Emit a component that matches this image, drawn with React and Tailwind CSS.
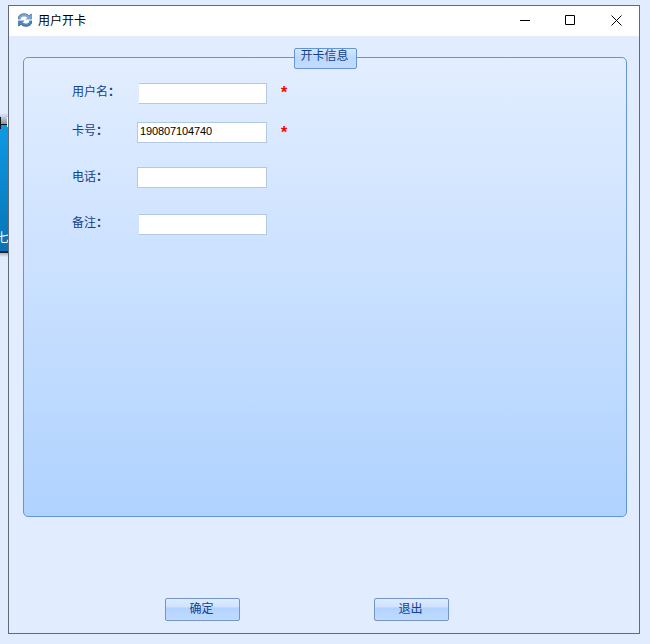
import { useState } from 'react'

const FIELDS = [
  { id: 'name', label: '用户名', row: 'h-[39px]', open: true, mark: 'mt-[2px]' },
  { id: 'card', label: '卡号', row: 'h-[45px]', mark: 'mt-[3px]' },
  { id: 'phone', label: '电话', row: 'h-[47px]', labelPad: 'pt-[2px]' },
  { id: 'remark', label: '备注', row: 'h-[21px]', open: true },
]

export default function App() {
  const [values, setValues] = useState({ name: '', card: '190807104740', phone: '', remark: '' })

  return (
    <div className="w-[650px] h-[644px] flex overflow-hidden bg-[#e1edff] font-['Liberation_Sans','Noto_Sans_CJK_SC',sans-serif] text-[12px] leading-[16px] text-[#15428b]">
      <BackgroundStrip />

      <div className="w-[632px] h-[629px] mt-[5px] flex flex-col border border-[#646a73] bg-[#e1edff]">
        <TitleBar />

        <div className="relative ml-[14px] mt-[21px] w-[604px] h-[460px] pt-[25px] rounded-[5px] border border-[#6496d7] bg-linear-to-b from-[#e3eeff] to-[#afd2ff]">
          <div className="absolute left-[270px] -top-[10px] w-[63px] h-[21px] pr-[2px] rounded-[2px] border border-[#6496d7] bg-linear-to-b from-[#d6e8ff] from-0% via-[#bcd8ff] via-45% to-[#c1dcff] text-center leading-[15px]">
            开卡信息
          </div>
          {FIELDS.map(f => (
            <Field
              key={f.id}
              field={f}
              value={values[f.id]}
              onChange={v => setValues({ ...values, [f.id]: v })}
            />
          ))}
        </div>

        <div className="mt-[81px] ml-[156px] flex gap-[134px]">
          <PushButton>确定</PushButton>
          <PushButton>退出</PushButton>
        </div>
      </div>
    </div>
  )
}

function TitleBar() {
  return (
    <header className="h-[30px] shrink-0 flex items-center bg-white text-black">
      <RefreshIcon />
      <h1 className="ml-[5px] flex-1">用户开卡</h1>
      <svg className="mr-[17px] mb-[1px]" width="102" height="11" viewBox="0 0 102 11" fill="none" stroke="#000">
        <path d="M0 5.5h10" />
        <path d="M45.500 .5h9v9h-9z" />
        <path d="M91.500 .5l10 10M101.500 .5l-10 10" />
      </svg>
    </header>
  )
}

function RefreshIcon() {
  return (
    <svg className="ml-[8px] mb-[2px]" width="16" height="16" viewBox="0 0 16 16">
      <path d="M1 7.500V5C2 2.500 4 1.500 7 1.500c2.500 0 4 .7 5 2L14.500 1.500V7.500H8.500L10.300 5.500C8.500 4 5.500 4.200 4.300 5.500L3.500 7.500z" fill="#7da5d3" />
      <path d="M15 8.500V11c-1 2.500-3 3.500-6 3.500-2.500 0-4-.7-5-2L1.500 14.500V8.500H7.500L5.700 10.500c1.800 1.500 4.800 1.300 6 0L12.500 8.500z" fill="#5687c0" />
      <path d="M1.500 7V5.200C3 2.400 5 1.800 7 1.800c2.500 0 4 .7 5 2l2.300-1.800V7.200" fill="none" stroke="#56799f" strokeWidth=".8" />
      <path d="M14.500 9v1.800c-1.500 2.800-3.500 3.400-5.500 3.400-2.500 0-4-.7-5-2L1.700 14V8.800" fill="none" stroke="#36659e" strokeWidth=".8" />
    </svg>
  )
}

function Field({ field, value, onChange }) {
  return (
    <div className={`flex items-start pl-[48px] ${field.row}`}>
      <label htmlFor={field.id} className={`w-[65px] flex ${field.labelPad || 'pt-[1px]'}`}>
        {field.label}<span className="font-bold">：</span>
      </label>
      <input
        id={field.id}
        value={value}
        onChange={e => onChange(e.target.value)}
        className={`h-[21px] border border-[#b2c8e4] bg-white pl-[2px] pb-[3px] text-[11px] tracking-[-0.12px] text-black outline-none ${
          field.open ? 'ml-[2px] w-[128px] border-l-0' : 'w-[130px]'
        }`}
      />
      {field.mark && (
        <span className={`ml-[14px] text-[16px] font-bold leading-[16px] text-[#f00] ${field.mark}`}>*</span>
      )}
    </div>
  )
}

function PushButton({ children }) {
  return (
    <button className="w-[75px] h-[23px] pb-[2px] pr-[2px] rounded-[2px] border border-[#7396c6] bg-[linear-gradient(#deebff,#cfe3ff_38%,#b2d3ff_42%,#c0dbff)]">
      {children}
    </button>
  )
}

// sliver of the window behind the dialog
function BackgroundStrip() {
  return (
    <div className="w-[8px] shrink-0 pt-[113px]">
      <div className="h-[11px] pt-[4px] flex justify-between bg-linear-to-b from-[#e1edff] to-[#8b95a5]">
        <div className="w-[1px] h-[12px] bg-[#14171c]" />
        <div className="w-[1px] h-[10px] bg-white" />
      </div>
      <div className="h-[129px] flex items-end border-t border-[#10181f] border-b-2 border-b-[#202030] bg-linear-to-b from-[#0d9be4] to-[#0873b5] pb-[5px] text-white">
        <span className="-ml-[3px]">七</span>
      </div>
      <div className="h-[4px] bg-linear-to-b from-[#a9b2c0] to-[#e1edff]" />
    </div>
  )
}
